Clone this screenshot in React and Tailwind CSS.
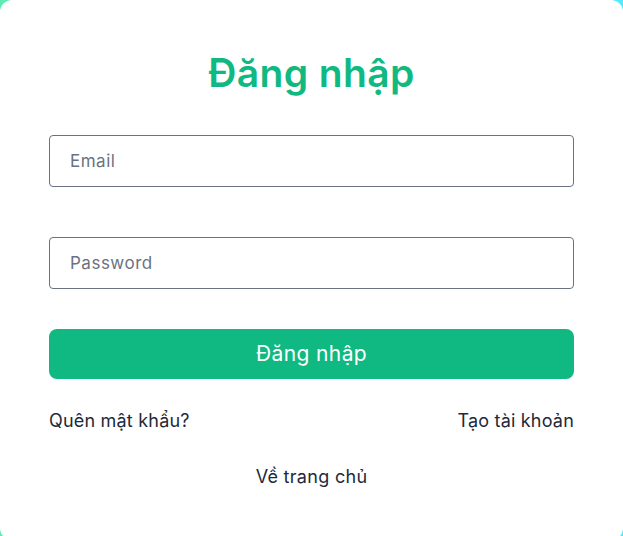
export default function App() {
  return (
    <div className="min-h-screen bg-gradient-to-r from-emerald-300 to-cyan-300 font-['Inter',sans-serif]">
      <div className="h-[540px] w-full rounded-xl bg-white px-[49px] pt-[49px]">
        <h1 className="text-center text-[39px] font-semibold leading-[48px] tracking-[0.4px] text-[#10b981]">
          Đăng nhập
        </h1>

        <form className="mt-[38px] flex flex-col" onSubmit={(e) => e.preventDefault()}>
          <input
            type="email"
            placeholder="Email"
            className="h-[52px] w-full rounded border border-gray-500 px-5 text-[17px] tracking-[0.5px] text-gray-800 placeholder:text-gray-500 outline-none"
          />
          <input
            type="password"
            placeholder="Password"
            className="mt-[50px] h-[52px] w-full rounded border border-gray-500 px-5 text-[17px] tracking-[0.5px] text-gray-800 placeholder:text-gray-500 outline-none"
          />
          <button
            type="submit"
            className="mt-10 h-[50px] w-full rounded-lg bg-[#10b981] text-[21px] tracking-[0.4px] text-white"
          >
            Đăng nhập
          </button>
        </form>

        <div className="mt-[28px] flex items-center justify-between text-[18px] tracking-[0.2px] text-gray-800">
          <a href="#">Quên mật khẩu?</a>
          <a href="#">Tạo tài khoản</a>
        </div>

        <div className="mt-[29px] text-center text-[18px] tracking-[0.3px] text-gray-800">
          <a href="#">Về trang chủ</a>
        </div>
      </div>
    </div>
  );
}
